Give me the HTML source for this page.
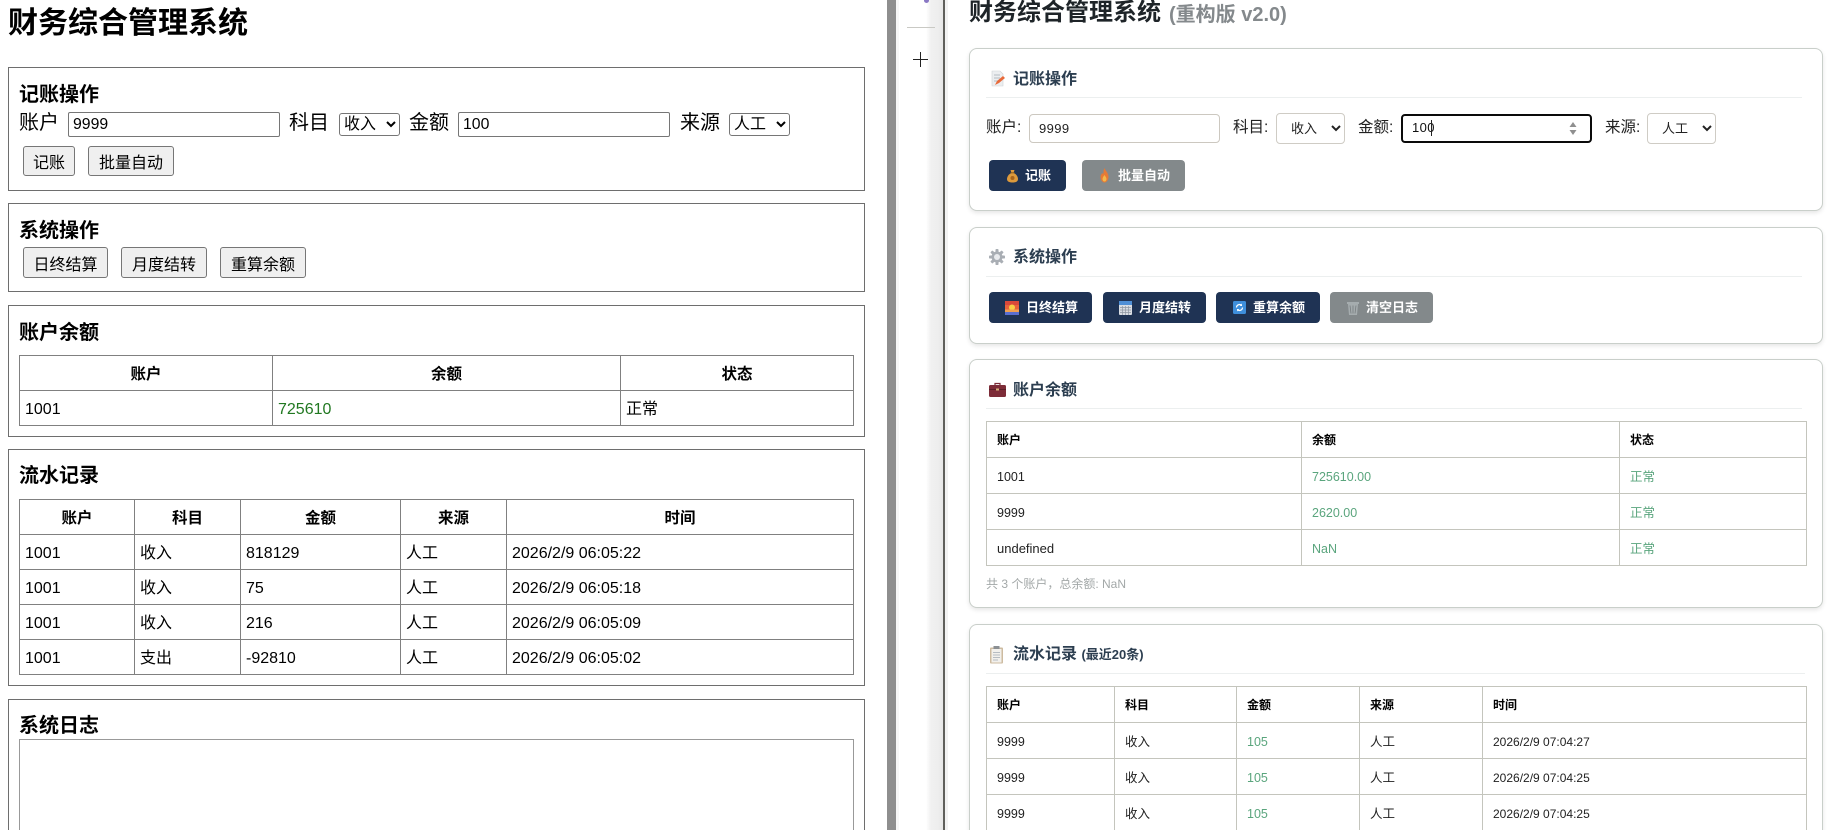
<!DOCTYPE html>
<html lang="zh-CN">
<head>
<meta charset="utf-8">
<title>财务综合管理系统</title>
<style>
html,body{margin:0;padding:0;width:1828px;height:830px;overflow:hidden;background:#fff;}
body{position:relative;font-family:"Liberation Sans","Noto Sans CJK SC",sans-serif;color:#000;}
.a{position:absolute;box-sizing:border-box;}
.t{position:absolute;white-space:nowrap;line-height:20px;height:20px;}
.box{position:absolute;box-sizing:border-box;border:1px solid #6e6e6e;left:8px;width:857px;}
.h2{font-size:20px;font-weight:700;left:19px;}
.l{font-size:20px;}
input,select,button{font-family:"Liberation Sans","Noto Sans CJK SC",sans-serif;margin:0;position:absolute;box-sizing:border-box;}
.li{border:1px solid #767676;border-radius:2px;background:#fff;font-size:15.8px;padding:0 4px;color:#000;height:25px;width:212px;top:112px;}
.ls{font-size:16px;height:23px;top:113px;width:61px;border:1px solid #767676;border-radius:3px;background:#fff;color:#000;padding:0;}
.lb{font-size:16px;background:#efefef;border:1px solid #767676;border-radius:3px;color:#000;padding:0;height:30px;}
table{position:absolute;border-collapse:collapse;table-layout:fixed;}
.lt{border:1px solid #808080;left:19px;width:834px;font-size:16px;}
.lt th,.lt td{border:1px solid #808080;height:35px;box-sizing:border-box;padding:3px 4px 0 5px;line-height:20px;white-space:nowrap;}
.lt th{font-size:15.5px;font-weight:700;text-align:center;padding:4px 5px 0 5px;}
.lt td{text-align:left;}
.lt .c{font-size:16px;padding-top:4px;}
.card{position:absolute;box-sizing:border-box;left:969px;width:854px;background:#fff;border:1px solid #c9cfca;border-radius:8px;box-shadow:0 2px 4px rgba(0,0,0,.10);}
.ch{font-size:16px;font-weight:700;color:#2c3e50;left:1013px;}
.dv{position:absolute;height:1px;background:#ecefef;left:986px;}
.rl{font-size:15.5px;color:#222;}
.ri{border:1px solid #ccc8c0;border-radius:4px;background:#fff;font-size:13px;color:#222;padding:0 9px;height:29px;width:191px;top:114px;letter-spacing:.4px;}
.rs{border:1px solid #cfccc5;border-radius:4px;background:#fff;font-size:13px;color:#222;height:31px;top:113px;width:69px;padding:0 10px;}
.rb{position:absolute;box-sizing:border-box;height:31px;border-radius:4px;background:#1f3354;}
.rb.g{background:#83898b;}
.bt{position:absolute;white-space:nowrap;color:#fff;font-size:13px;font-weight:700;line-height:20px;height:20px;}
.rt{border:1px solid #c4c5bd;left:986px;width:820px;font-size:12.5px;color:#222;}
.rt th,.rt td{border:1px solid #c4c5bd;height:36px;box-sizing:border-box;padding:0 10px;line-height:18px;white-space:nowrap;text-align:left;overflow:hidden;}
.rt th{font-size:12px;font-weight:700;color:#000;}
.rt td{font-size:12.5px;padding-top:2px;}
.gr{color:#5aa57d;}
svg{position:absolute;display:block;}
</style>
</head>
<body>

<!-- LEFT PANEL -->
<div class="t" style="left:8px;top:6px;height:36px;line-height:36px;font-size:30px;font-weight:700;">财务综合管理系统</div>

<div class="box" style="top:67px;height:124px;"></div>
<div class="t h2" style="top:85px;">记账操作</div>
<div class="t l" style="left:19px;top:113px;">账户</div>
<input class="li" style="left:68px;" value="9999">
<div class="t l" style="left:289px;top:113px;">科目</div>
<select class="ls" style="left:339px;"><option>收入</option></select>
<div class="t l" style="left:409px;top:113px;">金额</div>
<input class="li" style="left:458px;" value="100">
<div class="t l" style="left:680px;top:113px;">来源</div>
<select class="ls" style="left:729px;"><option>人工</option></select>
<button class="lb" style="left:23px;top:146px;width:52px;">记账</button>
<button class="lb" style="left:88px;top:146px;width:86px;">批量自动</button>

<div class="box" style="top:203px;height:89px;"></div>
<div class="t h2" style="top:221px;">系统操作</div>
<button class="lb" style="left:23px;top:247px;width:85px;height:31px;">日终结算</button>
<button class="lb" style="left:121px;top:247px;width:86px;height:31px;">月度结转</button>
<button class="lb" style="left:220px;top:247px;width:86px;height:31px;">重算余额</button>

<div class="box" style="top:305px;height:132px;"></div>
<div class="t h2" style="top:323px;">账户余额</div>
<table class="lt" style="top:355px;">
<colgroup><col style="width:253px"><col style="width:348px"><col style="width:233px"></colgroup>
<tr><th>账户</th><th>余额</th><th>状态</th></tr>
<tr><td>1001</td><td style="color:#217821;">725610</td><td class="c">正常</td></tr>
</table>

<div class="box" style="top:449px;height:237px;"></div>
<div class="t h2" style="top:466px;">流水记录</div>
<table class="lt" style="top:499px;">
<colgroup><col style="width:115px"><col style="width:106px"><col style="width:160px"><col style="width:106px"><col style="width:347px"></colgroup>
<tr><th>账户</th><th>科目</th><th>金额</th><th>来源</th><th>时间</th></tr>
<tr><td>1001</td><td class="c">收入</td><td>818129</td><td class="c">人工</td><td>2026/2/9 06:05:22</td></tr>
<tr><td>1001</td><td class="c">收入</td><td>75</td><td class="c">人工</td><td>2026/2/9 06:05:18</td></tr>
<tr><td>1001</td><td class="c">收入</td><td>216</td><td class="c">人工</td><td>2026/2/9 06:05:09</td></tr>
<tr><td>1001</td><td class="c">支出</td><td>-92810</td><td class="c">人工</td><td>2026/2/9 06:05:02</td></tr>
</table>

<div class="box" style="top:699px;height:160px;"></div>
<div class="t h2" style="top:716px;">系统日志</div>
<div class="a" style="left:19px;top:739px;width:835px;height:120px;border:1px solid #999;"></div>

<!-- DIVIDER STRIP -->
<div class="a" style="left:887px;top:0;width:9px;height:830px;background:#8e8e8e;"></div>
<div class="a" style="left:896px;top:0;width:3px;height:830px;background:#f6f6f6;"></div>
<div class="a" style="left:926px;top:0;width:17px;height:830px;background:linear-gradient(90deg,#fff,#f0f0f0 30%,#eee 70%,#e6e6e6);"></div>
<div class="a" style="left:943px;top:0;width:2px;height:830px;background:#5f5f5b;"></div>
<div class="a" style="left:945px;top:0;width:3px;height:830px;background:#f2f2f2;"></div>
<div class="a" style="left:907px;top:27px;width:28px;height:1px;background:#c9c9c4;"></div>
<div class="a" style="left:924px;top:0;width:5px;height:3px;background:#8a78c4;border-radius:0 0 3px 3px;"></div>
<div class="a" style="left:913px;top:59px;width:15px;height:1px;background:#222;"></div>
<div class="a" style="left:920px;top:52px;width:1px;height:15px;background:#222;"></div>

<!-- RIGHT PANEL -->
<div class="t" style="left:969px;top:-2px;height:30px;line-height:30px;font-size:24px;font-weight:700;color:#1e2428;">财务综合管理系统</div>
<div class="t" style="left:1169px;top:1px;height:28px;line-height:28px;font-size:20px;font-weight:700;color:#84898c;">(重构版 v2.0)</div>

<!-- card 1 -->
<div class="card" style="top:48px;height:163px;"></div>
<svg style="left:990px;top:70px;" width="16" height="17" viewBox="0 0 16 17"><path d="M2 1h8l3 3v12H2z" fill="#eceef0" stroke="#cfd3d6" stroke-width=".6"/><path d="M4 5h6M4 8h6M4 11h4" stroke="#b5bcc2" stroke-width="1"/><path d="M5 15l2-4 6-5 2 2-6 5z" fill="#e86a3a"/></svg>
<div class="t ch" style="top:70px;">记账操作</div>
<div class="dv" style="top:97px;width:816px;"></div>
<div class="t rl" style="left:986px;top:118px;">账户:</div>
<input class="ri" style="left:1029px;" value="9999">
<div class="t rl" style="left:1233px;top:118px;">科目:</div>
<select class="rs" style="left:1276px;"><option>收入</option></select>
<div class="t rl" style="left:1358px;top:118px;">金额:</div>
<div class="a" style="left:1401px;top:114px;width:191px;height:29px;border:2px solid #0a0a0a;border-radius:4px;background:#fff;"></div>
<div class="t" style="left:1412px;top:118px;font-size:13px;color:#111;letter-spacing:.4px;">100</div>
<div class="a" style="left:1431px;top:120px;width:1px;height:16px;background:#222;"></div>
<svg style="left:1569px;top:122px;" width="8" height="13" viewBox="0 0 8 13"><path d="M4 0l3.500 5h-7zM4 13l3.500-5h-7z" fill="#8f8f8f"/></svg>
<div class="t rl" style="left:1605px;top:118px;">来源:</div>
<select class="rs" style="left:1647px;"><option>人工</option></select>

<div class="rb" style="left:989px;top:160px;width:77px;"></div>
<svg style="left:1006px;top:169px;" width="13" height="14" viewBox="0 0 13 14"><path d="M4.500 1h4l-1 3c3 1 4.500 4 4.500 6 0 3-3 3.500-5.500 3.500S1 13 1 10c0-2 1.500-5 4.500-6z" fill="#dd9a3c"/><path d="M4.500 3.800h4" stroke="#8a5a1c" stroke-width="1"/><circle cx="6.500" cy="9" r="2" fill="#a8641c"/></svg>
<div class="bt" style="left:1025px;top:166px;">记账</div>
<div class="rb g" style="left:1082px;top:160px;width:103px;"></div>
<svg style="left:1100px;top:168px;" width="9" height="15" viewBox="0 0 9 15"><path d="M4.500 0c1 3 4 5 4 9 0 3-2 5.500-4 5.500S.5 12 .5 9c0-2 1-3 2-4 .5 1 1 1 1 0 0-2 0-3 1-5z" fill="#e67a35"/><path d="M4.500 7c.8 1.500 2 2.500 2 4s-1 2.500-2 2.500-2-1-2-2.500 1-2.500 2-4z" fill="#f3b94b"/></svg>
<div class="bt" style="left:1118px;top:166px;">批量自动</div>

<!-- card 2 -->
<div class="card" style="top:227px;height:117px;"></div>
<svg style="left:989px;top:249px;" width="16" height="16" viewBox="0 0 16 16"><g fill="#a9aeb4"><circle cx="8" cy="8" r="5.500"/><rect x="6.500" y="0" width="3" height="16" rx=".8"/><rect x="0" y="6.500" width="16" height="3" rx=".8"/><rect x="6.500" y="0" width="3" height="16" rx=".8" transform="rotate(45 8 8)"/><rect x="6.500" y="0" width="3" height="16" rx=".8" transform="rotate(-45 8 8)"/></g><circle cx="8" cy="8" r="3" fill="#e9ebee"/></svg>
<div class="t ch" style="top:248px;">系统操作</div>
<div class="dv" style="top:276px;width:816px;"></div>

<div class="rb" style="left:989px;top:292px;width:103px;"></div>
<svg style="left:1005px;top:301px;" width="14" height="14" viewBox="0 0 14 14"><rect width="14" height="14" rx="1" fill="#e8623c"/><rect y="0" width="14" height="4" fill="#d9483a"/><circle cx="7" cy="6.500" r="3" fill="#f7cf45"/><rect y="8.500" width="14" height="2.500" fill="#f0a050"/><rect y="11" width="14" height="3" fill="#5a6fd0"/></svg>
<div class="bt" style="left:1026px;top:298px;">日终结算</div>

<div class="rb" style="left:1103px;top:292px;width:103px;"></div>
<svg style="left:1119px;top:301px;" width="14" height="14" viewBox="0 0 14 14"><rect width="13" height="14" rx="1" fill="#d9dde3"/><rect width="13" height="4" fill="#4f8fd6"/><path d="M1 6.500h11M1 9h11M1 11.500h11M3.500 5v9M6.500 5v9M9.500 5v9" stroke="#8f97a3" stroke-width=".7"/></svg>
<div class="bt" style="left:1139px;top:298px;">月度结转</div>

<div class="rb" style="left:1216px;top:292px;width:104px;"></div>
<svg style="left:1233px;top:301px;" width="13" height="13" viewBox="0 0 13 13"><rect width="13" height="13" rx="1.500" fill="#3f8fdc"/><path d="M3.500 6.500a3 3 0 0 1 5-2.200M9.500 6.500a3 3 0 0 1-5 2.200" fill="none" stroke="#fff" stroke-width="1.200"/><path d="M9 2.500v2.500H6.700zM4 10.500V8h2.300z" fill="#fff"/></svg>
<div class="bt" style="left:1253px;top:298px;">重算余额</div>

<div class="rb g" style="left:1330px;top:292px;width:103px;"></div>
<svg style="left:1347px;top:302px;" width="12" height="13" viewBox="0 0 12 13"><path d="M0 0h12v2H0zM1 2h10l-1 11H2z" fill="#a5acae"/><path d="M3 3.500l1 8M6 3.500v8M9 3.500l-1 8" stroke="#777d7f" stroke-width=".8"/></svg>
<div class="bt" style="left:1366px;top:298px;">清空日志</div>

<!-- card 3 -->
<div class="card" style="top:359px;height:249px;"></div>
<svg style="left:989px;top:382px;" width="17" height="15" viewBox="0 0 17 15"><path d="M6 3V1.500h5V3" fill="none" stroke="#7a2a35" stroke-width="1.200"/><rect y="3" width="17" height="12" rx="1.500" fill="#7d2c38"/><rect y="7" width="17" height="1" fill="#5c1f28"/><rect x="7" y="6.500" width="3" height="2" fill="#d8b07a"/></svg>
<div class="t ch" style="top:381px;">账户余额</div>
<div class="dv" style="top:408px;width:816px;"></div>
<table class="rt" style="top:421px;">
<colgroup><col style="width:315px"><col style="width:318px"><col style="width:187px"></colgroup>
<tr><th>账户</th><th>余额</th><th>状态</th></tr>
<tr><td>1001</td><td class="gr">725610.00</td><td class="gr">正常</td></tr>
<tr><td>9999</td><td class="gr">2620.00</td><td class="gr">正常</td></tr>
<tr><td style="font-size:13px;">undefined</td><td class="gr">NaN</td><td class="gr">正常</td></tr>
</table>
<div class="t" style="left:986px;top:574px;font-size:12px;color:#a3a8a8;">共 3 个账户，总余额: NaN</div>

<!-- card 4 -->
<div class="card" style="top:624px;height:240px;"></div>
<svg style="left:990px;top:646px;" width="14" height="18" viewBox="0 0 14 18"><rect y="1.500" width="13" height="16" rx="1" fill="#cdbba0"/><rect x="1.500" y="3" width="10" height="13.500" fill="#f2f0ec"/><rect x="3.500" y="0" width="6" height="3" fill="#8b8f93"/><path d="M3 6.500h7M3 9h7M3 11.500h7M3 14h5" stroke="#b6bcc2" stroke-width=".9"/></svg>
<div class="t ch" style="top:645px;">流水记录 <span style="font-size:13px;">(最近20条)</span></div>
<div class="dv" style="top:673px;width:819px;"></div>
<table class="rt" style="top:686px;">
<colgroup><col style="width:128px"><col style="width:122px"><col style="width:123px"><col style="width:123px"><col style="width:324px"></colgroup>
<tr><th>账户</th><th>科目</th><th>金额</th><th>来源</th><th>时间</th></tr>
<tr><td>9999</td><td>收入</td><td class="gr">105</td><td>人工</td><td style="font-size:12px;">2026/2/9 07:04:27</td></tr>
<tr><td>9999</td><td>收入</td><td class="gr">105</td><td>人工</td><td style="font-size:12px;">2026/2/9 07:04:25</td></tr>
<tr><td>9999</td><td>收入</td><td class="gr">105</td><td>人工</td><td style="font-size:12px;">2026/2/9 07:04:25</td></tr>
</table>

</body>
</html>
